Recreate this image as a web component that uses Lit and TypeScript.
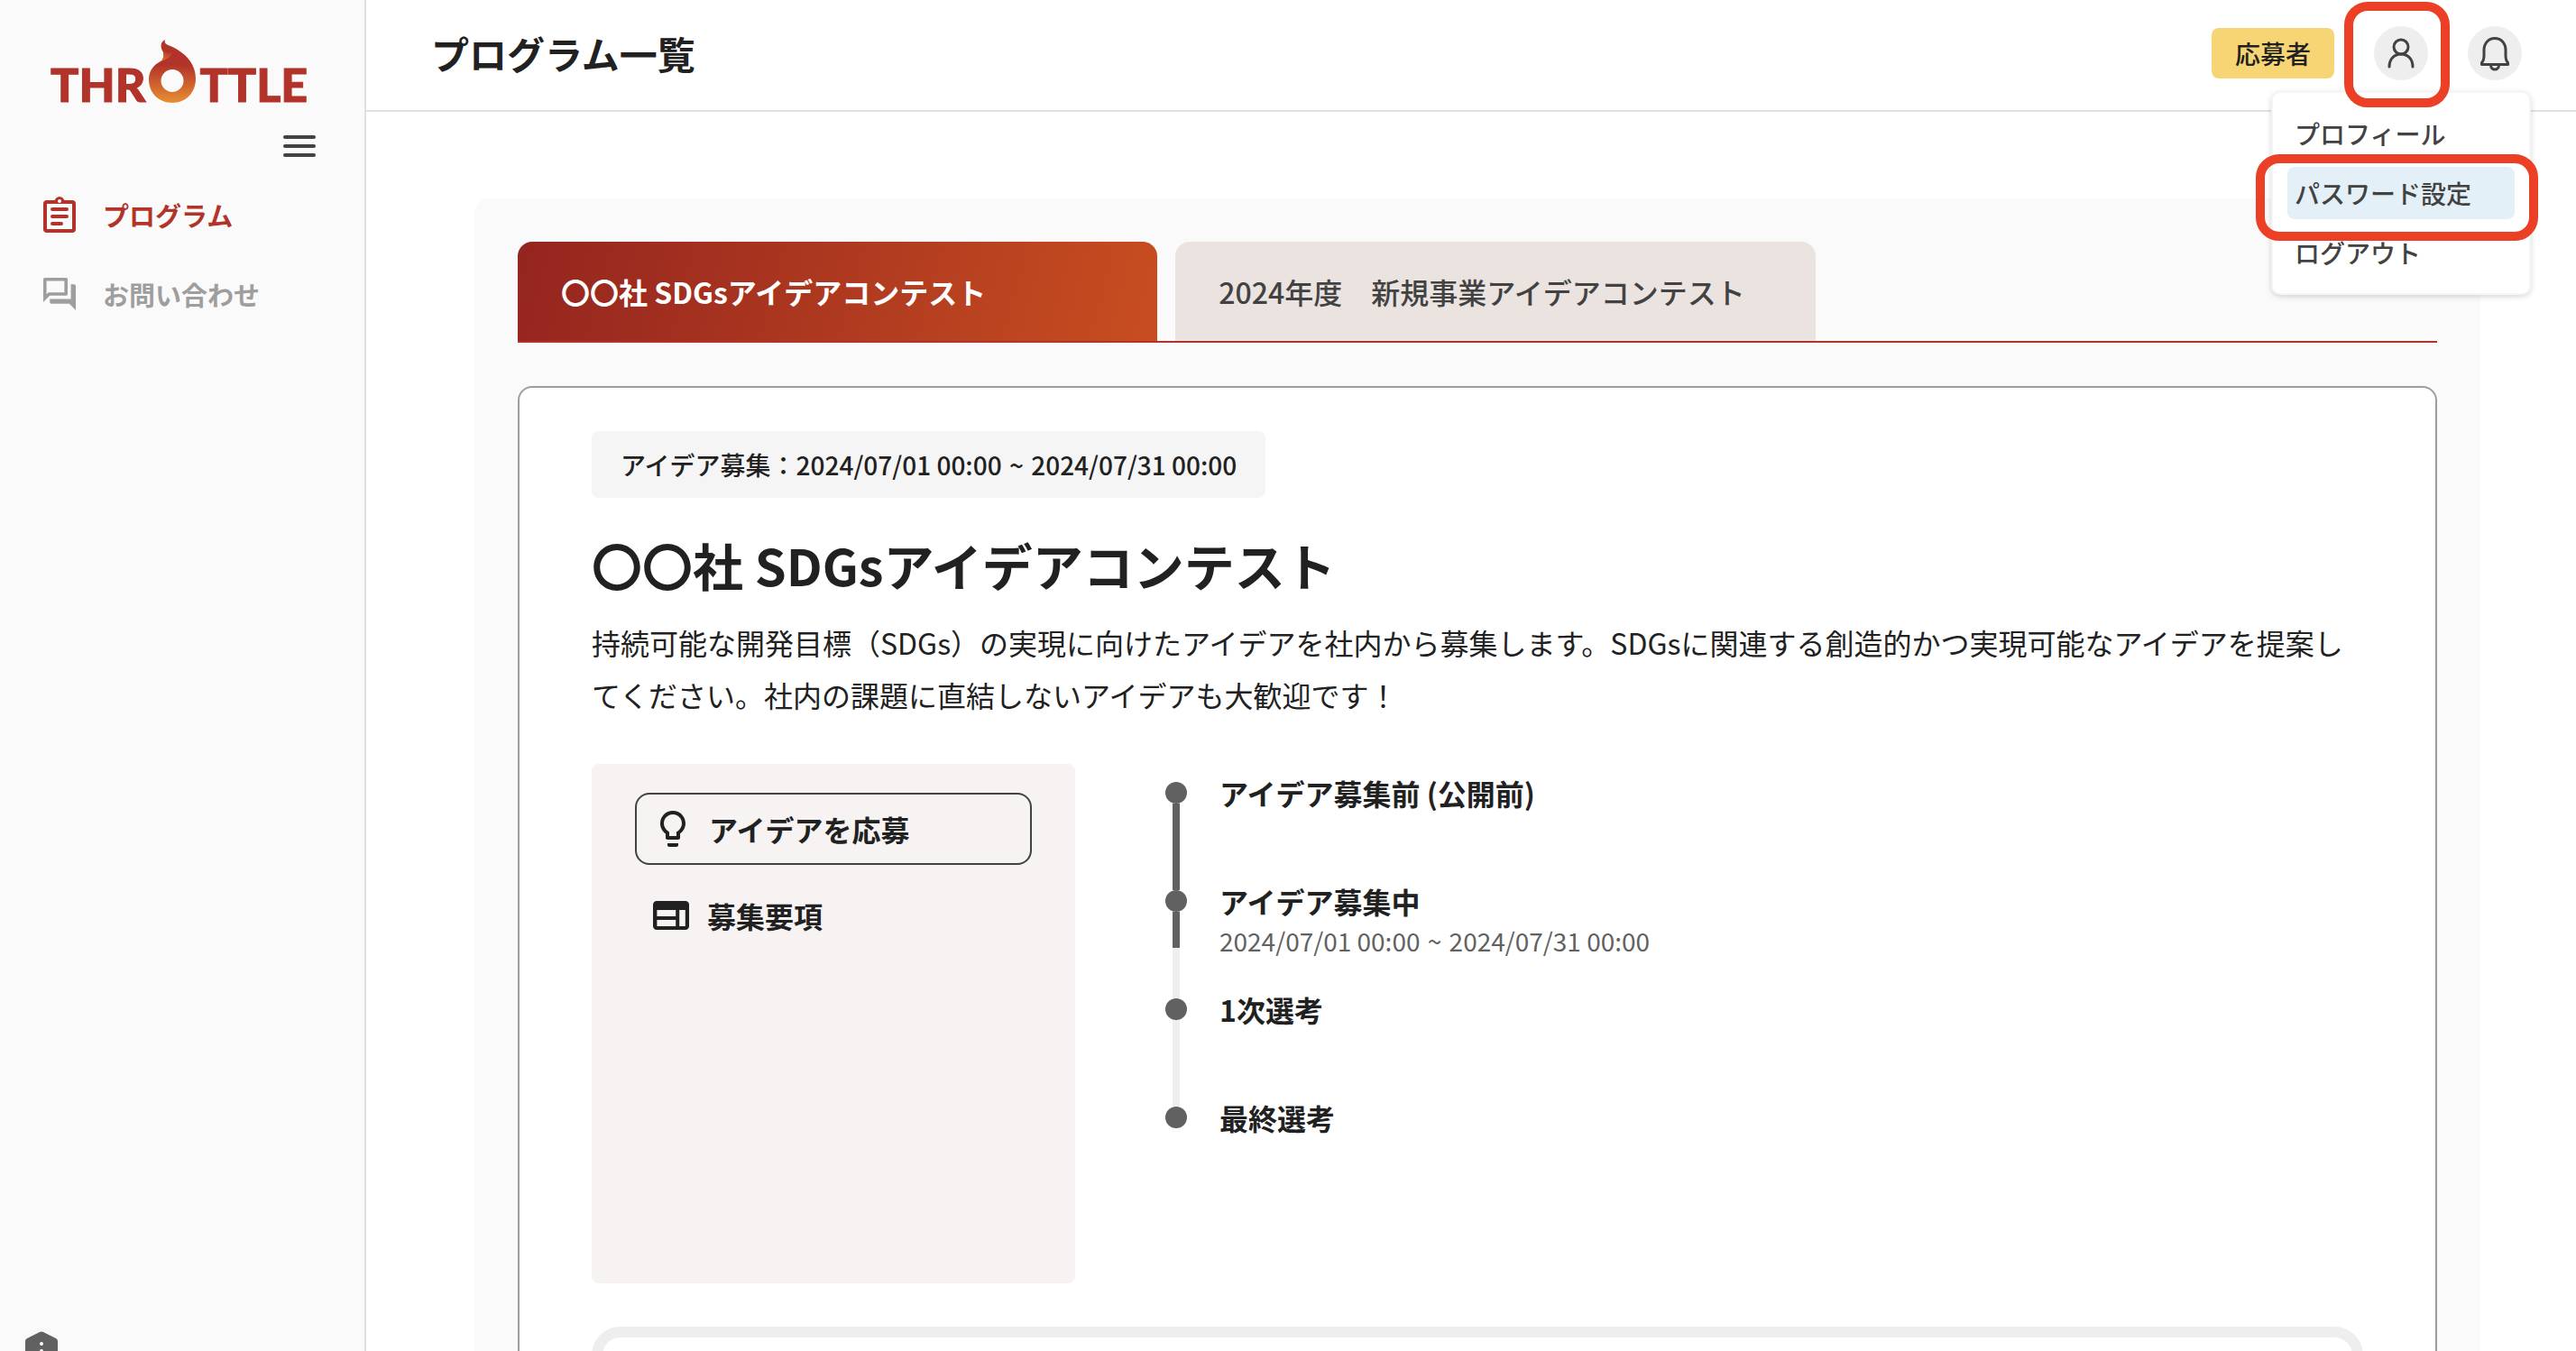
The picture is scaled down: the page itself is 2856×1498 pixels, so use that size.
import { LitElement, html, css, svg, nothing } from 'lit';
import { customElement, property, state } from 'lit/decorators.js';
import { classMap } from 'lit/directives/class-map.js';

interface Phase {
  label: string;
  period?: [string, string];
  // state of the line that leads to the next phase
  line: 'done' | 'current' | 'todo' | 'none';
}

const PERIOD: [string, string] = ['2024/07/01 00:00', '2024/07/31 00:00'];

const PROGRAMS = ['〇〇社 SDGsアイデアコンテスト', '2024年度　新規事業アイデアコンテスト'];

const PHASES: Phase[] = [
  { label: 'アイデア募集前 (公開前)', line: 'done' },
  { label: 'アイデア募集中', period: PERIOD, line: 'current' },
  { label: '1次選考', line: 'todo' },
  { label: '最終選考', line: 'none' },
];

const MENU_ITEMS = ['プロフィール', 'パスワード設定', 'ログアウト'];

const periodStyles = css`
  .until {
    margin: 0 2px;
  }
`;

const renderPeriod = ([from, to]: [string, string]) =>
  html`${from} <span class="until">~</span> ${to}`;

const clipboardIcon = svg`
  <svg class="nav-icon" viewBox="0 0 36 40" width="36" height="40" aria-hidden="true">
    <rect x="2" y="6" width="32" height="32" rx="2" fill="none" stroke="currentColor" stroke-width="4" />
    <path d="M12 6C13 2 15 0 18 0s5 2 6 6z" fill="currentColor" />
    <circle cx="18" cy="5" r="2" fill="#fafafa" />
    <path d="M10 14h16M10 22h16M10 30h10" stroke="currentColor" stroke-width="4" stroke-linecap="round" />
  </svg>`;

const forumIcon = svg`
  <svg class="nav-icon" viewBox="2 2 20 20" width="36" height="36" aria-hidden="true">
    <path fill="currentColor" d="M15 4v7H5.17L4 12.17V4h11m1-2H3c-.55 0-1 .45-1 1v14l4-4h10c.55 0 1-.45 1-1V3c0-.55-.45-1-1-1zm5 4h-2v9H6v2c0 .55.45 1 1 1h11l4 4V7c0-.55-.45-1-1-1z" />
  </svg>`;

const menuIcon = svg`
  <svg viewBox="0 0 48 48" width="48" height="48" aria-hidden="true">
    <path d="M8 14h32M8 24h32M8 34h32" stroke="currentColor" stroke-width="4" stroke-linecap="round" />
  </svg>`;

const userIcon = svg`
  <svg viewBox="0 0 60 60" width="60" height="60" fill="none" stroke="currentColor" stroke-width="3" aria-hidden="true">
    <circle cx="30" cy="23" r="8" />
    <path d="M17 45C17 37 22 31 30 31s13 6 13 14" stroke-linecap="round" />
  </svg>`;

const bellIcon = svg`
  <svg viewBox="0 0 60 60" width="60" height="60" fill="none" stroke="currentColor" stroke-width="3" stroke-linejoin="round" aria-hidden="true">
    <path d="M15.500 42.500v-2c2-2 2.500-4 2.500-8v-6C18 19 23 13.500 30 13.500S42 19 42 26.500v6c0 4 .5 6 2.500 8v2z" />
    <path d="M25.500 43c0 3 2 5 4.500 5s4.500-2 4.500-5" />
  </svg>`;

const bulbIcon = svg`
  <svg viewBox="0 0 24 24" width="48" height="48" aria-hidden="true">
    <path fill="currentColor" d="M9 21c0 .5.400 1 1 1h4c.6 0 1-.5 1-1v-1H9v1zm3-19C8.100 2 5 5.100 5 9c0 2.400 1.200 4.500 3 5.700V17c0 .5.400 1 1 1h6c.6 0 1-.5 1-1v-2.300c1.800-1.300 3-3.400 3-5.700 0-3.900-3.100-7-7-7zm2.900 11.100-.9.600V16h-4v-2.300l-.9-.6C7.800 12.200 7 10.600 7 9c0-2.800 2.200-5 5-5s5 2.200 5 5c0 1.600-.8 3.200-2.100 4.100z" />
  </svg>`;

const layoutIcon = svg`
  <svg viewBox="0 0 24 24" width="48" height="48" aria-hidden="true">
    <path fill="currentColor" fill-rule="evenodd" d="M20 4H4c-1.100 0-2 .9-2 2v12c0 1.100.9 2 2 2h16c1.100 0 2-.9 2-2V6c0-1.100-.9-2-2-2zM14.600 18H4.200v-3.500h10.400zM14.600 12.500H4.200V9h10.400zM19.900 18h-3.300V9h3.300z" />
  </svg>`;

@customElement('throttle-logo')
export class ThrottleLogo extends LitElement {
  static styles = css`
    :host {
      display: flex;
      align-items: flex-end;
      color: #b23329;
      font: 900 52px/52px Lato, sans-serif;
      -webkit-text-stroke: 1px currentColor;
    }
    .flame {
      flex: none;
      margin: 0 4px;
      padding-bottom: 5px;
    }
  `;

  render() {
    return html`
      <span>THR</span>
      <svg class="flame" viewBox="0 0 52 70" width="52" height="70" aria-label="O" role="img">
        <defs>
          <linearGradient id="fire" x1="0" y1="0" x2="0" y2="1">
            <stop offset="0.400" stop-color="#b23329" />
            <stop offset="1" stop-color="#e88f33" />
          </linearGradient>
          <linearGradient id="ember" x1="0.700" y1="0" x2="0.200" y2="1">
            <stop offset="0" stop-color="#b23329" />
            <stop offset="1" stop-color="#d9752f" />
          </linearGradient>
        </defs>
        <path fill="url(#fire)" fill-rule="evenodd" d="M18 0C12 3 13 9 16 14c1 4 0 8-3 10C5 28 0 35 0 44c0 15 11 26 26 26s26-11 26-27C52 25 38 13 24 7 18 5 17 3 18 0zM26 33a12.500 12.500 0 1 1 0 25 12.500 12.500 0 1 1 0-25z" />
        <path fill="url(#ember)" d="M16 13c4 2 8 1 11 0-1 6-7 8-13 11 2-3 3-7 2-11z" />
      </svg>
      <span>TTLE</span>
    `;
  }
}

@customElement('app-sidebar')
export class AppSidebar extends LitElement {
  static styles = css`
    :host {
      box-sizing: border-box;
      position: relative;
      display: flex;
      flex-direction: column;
      overflow: hidden;
      padding: 44px 0 0;
      background: #fafafa;
      border-right: 2px solid #e0e0e0;
    }
    throttle-logo {
      margin-left: 56px;
    }
    .toggle {
      align-self: flex-end;
      margin: 19px 48px 0 0;
      padding: 0;
      border: 0;
      background: none;
      color: #424242;
      cursor: pointer;
    }
    .toggle svg {
      display: block;
    }
    .nav {
      display: flex;
      flex-direction: column;
      gap: 40px;
      padding: 28px 48px 0;
    }
    .nav-link {
      display: flex;
      align-items: center;
      gap: 30px;
      height: 48px;
      color: #9e9e9e;
      font-size: 29px;
      font-weight: 700;
      line-height: 48px;
      text-decoration: none;
      white-space: nowrap;
    }
    .nav-link.active {
      color: #b23329;
    }
    .help {
      position: absolute;
      left: 28px;
      bottom: -18px;
      padding: 0;
      border: 0;
      background: none;
    }
    .help svg {
      display: block;
    }
  `;

  render() {
    return html`
      <throttle-logo></throttle-logo>
      <button class="toggle" aria-label="メニュー">${menuIcon}</button>
      <nav class="nav">
        <a class="nav-link active" href="#programs">${clipboardIcon}<span>プログラム</span></a>
        <a class="nav-link" href="#contact">${forumIcon}<span>お問い合わせ</span></a>
      </nav>
      <button class="help" aria-label="ヘルプ">
        <svg viewBox="0 0 36 40" width="36" height="40" aria-hidden="true">
          <path fill="#616161" d="M16 1q2-1 4 0l14 7q2 1 2 3v18q0 2-2 3l-14 7q-2 1-4 0L2 32q-2-1-2-3V11q0-2 2-3z" />
          <path d="M18 14v0M18 22v6" stroke="#fff" stroke-width="4" stroke-linecap="round" />
        </svg>
      </button>
    `;
  }
}

@customElement('app-header')
export class AppHeader extends LitElement {
  static styles = css`
    :host {
      box-sizing: border-box;
      display: flex;
      align-items: center;
      justify-content: space-between;
      height: 124px;
      padding: 0 60px 4px 72px;
      border-bottom: 2px solid #e0e0e0;
      background: #fff;
    }
    .title {
      margin: 0;
      color: #212121;
      font-size: 42px;
      font-weight: 700;
      line-height: 60px;
    }
    .tools {
      display: flex;
      align-items: center;
      gap: 44px;
    }
    .role {
      padding: 0 26px;
      border-radius: 8px;
      background: #f8d574;
      color: #212121;
      font-size: 28px;
      font-weight: 500;
      line-height: 56px;
    }
    .account {
      position: relative;
    }
    .round {
      display: block;
      width: 60px;
      height: 60px;
      padding: 0;
      border: 0;
      border-radius: 50%;
      background: #eee;
      color: #424242;
      cursor: pointer;
    }
    .round svg {
      display: block;
    }
    .menu {
      position: absolute;
      top: 74px;
      right: -112px;
      z-index: 2;
      box-sizing: border-box;
      display: flex;
      flex-direction: column;
      gap: 8px;
      width: 284px;
      margin: 0;
      padding: 16px;
      border-radius: 8px;
      background: #fff;
      box-shadow: 0 0 0 2px #f5f5f5, 0 2px 6px 2px rgba(0, 0, 0, 0.16);
      list-style: none;
    }
    .menu-item {
      position: relative;
    }
    .menu-button {
      display: block;
      width: 100%;
      padding: 0 8px;
      border: 0;
      border-radius: 8px;
      background: none;
      color: #424242;
      font: inherit;
      font-size: 28px;
      font-weight: 500;
      line-height: 58px;
      text-align: left;
      white-space: nowrap;
      cursor: pointer;
    }
    .menu-button.hover {
      background: #e4f0f7;
    }
    .ring {
      position: absolute;
      z-index: 3;
      border: 10px solid #eb4025;
      border-radius: 26px;
      pointer-events: none;
    }
    .ring-account {
      inset: -27px -24px -30px -33px;
    }
    .ring-item {
      inset: -14px -26px -24px -35px;
    }
  `;

  @property({ type: Boolean })
  open = false;

  private _toggle() {
    this.open = !this.open;
  }

  private _renderMenu() {
    return html`
      <ul class="menu">
        ${MENU_ITEMS.map((label, i) => html`
          <li class="menu-item">
            <button class=${classMap({ 'menu-button': true, hover: i === 1 })}>${label}</button>
            ${i === 1 ? html`<span class="ring ring-item"></span>` : nothing}
          </li>
        `)}
      </ul>
    `;
  }

  render() {
    return html`
      <h1 class="title">プログラム一覧</h1>
      <div class="tools">
        <span class="role">応募者</span>
        <div class="account">
          <button class="round" aria-label="アカウント" @click=${this._toggle}>${userIcon}</button>
          ${this.open ? this._renderMenu() : nothing}
          <span class="ring ring-account"></span>
        </div>
        <button class="round" aria-label="通知">${bellIcon}</button>
      </div>
    `;
  }
}

@customElement('phase-timeline')
export class PhaseTimeline extends LitElement {
  static styles = [periodStyles, css`
    :host {
      display: block;
    }
    .phases {
      margin: 0;
      padding: 20px 0 0;
      list-style: none;
    }
    .phase {
      display: grid;
      grid-template-columns: 24px 1fr;
      column-gap: 36px;
      min-height: 120px;
    }
    .axis {
      display: flex;
      flex-direction: column;
      align-items: center;
    }
    .dot {
      width: 24px;
      height: 24px;
      border-radius: 50%;
      background: #616161;
    }
    .line {
      flex: 1;
      width: 8px;
      background: #eee;
    }
    .line.done {
      background: #616161;
    }
    .line.current {
      background: linear-gradient(#616161 40px, #eee 40px);
    }
    .line.none {
      background: none;
    }
    .label,
    .period {
      margin: 0;
    }
    .label {
      color: #212121;
      font-size: 32px;
      font-weight: 700;
      line-height: 24px;
    }
    .period {
      padding-top: 16px;
      color: #616161;
      font-size: 28px;
      line-height: 32px;
    }
  `];

  @property({ attribute: false })
  phases: Phase[] = [];

  render() {
    return html`
      <ol class="phases">
        ${this.phases.map(phase => html`
          <li class="phase">
            <div class="axis">
              <span class="dot"></span>
              <span class="line ${phase.line}"></span>
            </div>
            <div>
              <h3 class="label">${phase.label}</h3>
              ${phase.period ? html`<p class="period">${renderPeriod(phase.period)}</p>` : nothing}
            </div>
          </li>
        `)}
      </ol>
    `;
  }
}

@customElement('app-root')
export class AppRoot extends LitElement {
  static styles = [periodStyles, css`
    :host {
      display: grid;
      grid-template-columns: 406px minmax(0, 1fr);
      height: 100vh;
      overflow: hidden;
      background: #fff;
      color: #212121;
      font-family: "Noto Sans CJK JP", sans-serif;
    }
    .content {
      display: flex;
      flex-direction: column;
      min-height: 0;
    }
    .scroll {
      flex: 1;
      min-height: 0;
      overflow-y: auto;
      scrollbar-width: none;
      padding: 96px 106px 0 120px;
    }
    .panel {
      padding: 48px;
      border-radius: 16px;
      background: #fafafa;
    }
    .tabs {
      display: flex;
      gap: 20px;
      border-bottom: 2px solid #b23329;
    }
    .tab {
      width: calc(100% / 3);
      padding: 0 48px;
      border: 0;
      border-radius: 16px 16px 0 0;
      background: #eae3e0;
      color: #424242;
      font: inherit;
      font-size: 32px;
      font-weight: 500;
      line-height: 110px;
      text-align: left;
      white-space: nowrap;
      cursor: pointer;
    }
    .tab.active {
      background: linear-gradient(105deg, #94241f, #c84e20);
      color: #fff;
      font-weight: 700;
    }
    .card {
      margin-top: 48px;
      padding: 48px 80px;
      border: 2px solid #9e9e9e;
      border-radius: 16px;
      background: #fff;
    }
    .term {
      display: inline-block;
      padding: 16px 32px;
      border-radius: 8px;
      background: #f5f5f5;
      font-size: 28px;
      font-weight: 500;
      line-height: 42px;
      vertical-align: top;
    }
    .name {
      margin: 32px 0 16px;
      font-size: 56px;
      font-weight: 700;
      line-height: 84px;
    }
    .summary {
      margin: 0;
      font-size: 32px;
      line-height: 1.8;
    }
    .overview {
      display: grid;
      grid-template-columns: 536px minmax(0, 1fr);
      gap: 100px;
      margin: 48px 0;
    }
    .actions {
      box-sizing: border-box;
      display: flex;
      flex-direction: column;
      gap: 16px;
      min-height: 576px;
      padding: 32px 48px;
      border-radius: 8px;
      background: #f6f3f2;
    }
    .action {
      display: flex;
      align-items: center;
      gap: 16px;
      height: 80px;
      padding: 0 16px;
      border: 0;
      border-radius: 16px;
      background: none;
      color: #212121;
      font: inherit;
      font-size: 32px;
      font-weight: 700;
      cursor: pointer;
    }
    .action.outlined {
      border: 2px solid #424242;
    }
    .detail {
      min-height: 320px;
      border: 12px solid #eee;
      border-radius: 32px;
    }
  `];

  @state()
  private _selected = 0;

  render() {
    return html`
      <app-sidebar></app-sidebar>
      <div class="content">
        <app-header open></app-header>
        <main class="scroll">
          <div class="panel">
            <div class="tabs" role="tablist">
              ${PROGRAMS.map((name, i) => html`
                <button
                  role="tab"
                  aria-selected=${i === this._selected}
                  class=${classMap({ tab: true, active: i === this._selected })}
                  @click=${() => { this._selected = i; }}
                >${name}</button>
              `)}
            </div>
            <section class="card">
              <div class="term">アイデア募集：${renderPeriod(PERIOD)}</div>
              <h2 class="name">${PROGRAMS[this._selected]}</h2>
              <p class="summary">持続可能な開発目標（SDGs）の実現に向けたアイデアを社内から募集します。SDGsに関連する創造的かつ実現可能なアイデアを提案してください。社内の課題に直結しないアイデアも大歓迎です！</p>
              <div class="overview">
                <div class="actions">
                  <button class="action outlined">${bulbIcon}<span>アイデアを応募</span></button>
                  <button class="action">${layoutIcon}<span>募集要項</span></button>
                </div>
                <phase-timeline .phases=${PHASES}></phase-timeline>
              </div>
              <div class="detail"></div>
            </section>
          </div>
        </main>
      </div>
    `;
  }
}

declare global {
  interface HTMLElementTagNameMap {
    'app-root': AppRoot;
    'app-header': AppHeader;
    'app-sidebar': AppSidebar;
    'phase-timeline': PhaseTimeline;
    'throttle-logo': ThrottleLogo;
  }
}
